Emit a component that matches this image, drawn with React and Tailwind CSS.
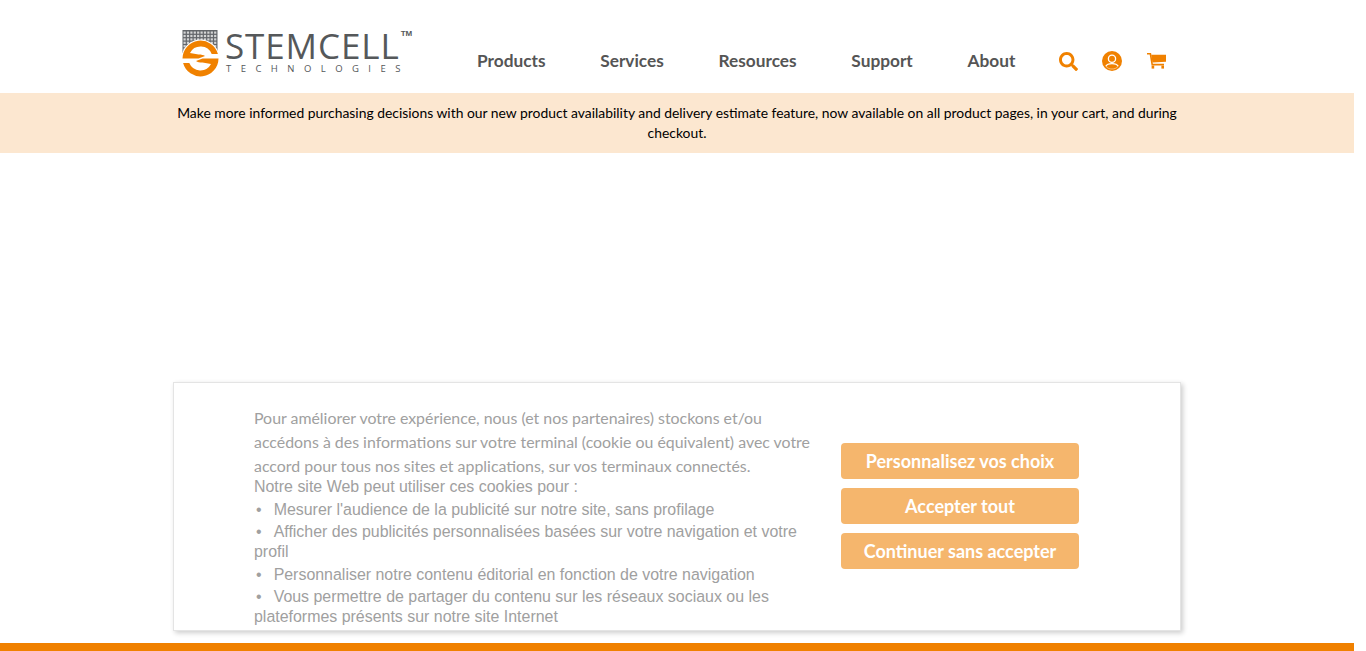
import { FaSearch } from "react-icons/fa";

const navItems = ["Products", "Services", "Resources", "Support", "About"];

const cookieUses = [
  "Mesurer l'audience de la publicité sur notre site, sans profilage",
  "Afficher des publicités personnalisées basées sur votre navigation et votre profil",
  "Personnaliser notre contenu éditorial en fonction de votre navigation",
  "Vous permettre de partager du contenu sur les réseaux sociaux ou les plateformes présents sur notre site Internet",
];

const cookieButtons = ["Personnalisez vos choix", "Accepter tout", "Continuer sans accepter"];

const swoosh = "M0 28 A18 18 0 0 1 35.4 23.5 L29.2 23.5 A12 12 0 0 0 7.5 22.5 L16 24 C19 24 21 24.5 22.5 25.5 L16 28 Z";

function LogoMark() {
  const dots = [];
  for (let row = 0; row < 6; row++) {
    for (let col = 0; col < 10; col++) {
      dots.push(<rect key={`${row}-${col}`} x={1.5 + col * 3.4} y={1.5 + row * 3.4} width="2.2" height="2.2" fill="#d4d5d6" />);
    }
  }
  return (
    <svg width="37" height="47" viewBox="0 0 37 47" className="shrink-0">
      <rect x="0.5" y="0" width="35" height="23" fill="#63666a" />
      {dots}
      <g transform="translate(0.5 0.5)">
        <circle cx="18" cy="28" r="19" fill="#ffffff" />
        <path d={swoosh} fill="#f08100" />
        <path d={swoosh} fill="#f08100" transform="rotate(180 18 28)" />
      </g>
    </svg>
  );
}

function Logo() {
  return (
    <div className="flex w-[295px] items-start pl-2">
      <div className="mt-[8px]">
        <LogoMark />
      </div>
      <div className="ml-[7px] mt-[7px] flex flex-col text-[#55585a]">
        <div className="flex h-[35px] items-start">
          <span className="-ml-[1px] font-['Open_Sans',sans-serif] text-[35px] font-medium leading-[34px] tracking-[0.9px]">STEMCELL</span>
          <span className="ml-[1px] mt-[1px] font-['Liberation_Sans',sans-serif] text-[8px] font-bold leading-[8px]">TM</span>
        </div>
        <span className="font-['Open_Sans',sans-serif] text-[9.5px] leading-[10px] tracking-[9.45px]">TECHNOLOGIES</span>
      </div>
    </div>
  );
}

function UserIcon() {
  return (
    <svg width="20" height="20" viewBox="0 0 20 20">
      <circle cx="10" cy="10" r="10" fill="#f08100" />
      <circle cx="10" cy="7.8" r="3.6" fill="#f08100" stroke="#ffffff" strokeWidth="1.3" />
      <path d="M3.8 15.2 C5 13 7 12.6 10 12.6 C13 12.6 15 13 16.2 15.2" fill="none" stroke="#ffffff" strokeWidth="1.3" />
      <path d="M3.8 15.2 C5.5 17.2 7.5 18 10 18 C12.5 18 14.5 17.2 16.2 15.2" fill="none" stroke="#ffffff" strokeWidth="0.8" opacity="0.6" />
    </svg>
  );
}

function CartIcon() {
  return (
    <svg width="19" height="16" viewBox="0 0 19 16">
      <path d="M0 0.8 H3.4 L5.2 11.6 H17" fill="none" stroke="#f08100" strokeWidth="1.6" />
      <path d="M4.2 1.8 H19 V8.8 L5.4 9.6 Z" fill="#f08100" />
      <rect x="4.6" y="12.6" width="2.6" height="3" fill="#f08100" />
      <rect x="14.4" y="12.6" width="2.6" height="3" fill="#f08100" />
    </svg>
  );
}

function Header() {
  return (
    <header className="h-[93px] w-full shrink-0 bg-white">
      <div className="mx-auto flex h-full w-[1006px] items-start pt-[22px]">
        <Logo />
        <nav className="ml-[8px] mt-[27px] flex gap-[54.7px] text-[17.28px] font-bold leading-[24px] text-[#555555]">
          {navItems.map((item) => (
            <a key={item} href="#">{item}</a>
          ))}
        </nav>
        <div className="ml-[43.5px] mt-[29px] flex items-center text-[#f08100]">
          <FaSearch className="text-[19px]" />
          <span className="ml-[24px]"><UserIcon /></span>
          <span className="ml-[25px]"><CartIcon /></span>
        </div>
      </div>
    </header>
  );
}

function CookieCard() {
  return (
    <div className="flex h-[249px] w-[1008px] items-start border border-[#e4e4e4] bg-white pl-[80px] shadow-[2px_2px_5px_rgba(0,0,0,0.2)]">
      <div className="w-[558px] pt-[23px] text-[#a0a0a0]">
        <p className="text-[15.9px] leading-[24px]">
          Pour améliorer votre expérience, nous (et nos partenaires) stockons et/ou accédons à des informations sur votre terminal (cookie ou équivalent) avec votre accord pour tous nos sites et applications, sur vos terminaux connectés.
        </p>
        <div className="-mt-[1px] font-['Liberation_Sans',sans-serif] text-[15.95px] leading-[20px]">
          <p className="mb-[2.5px]">Notre site Web peut utiliser ces cookies pour :</p>
          {cookieUses.map((text) => (
            <p key={text} className="mb-[2.5px] indent-[2px]">
              {"•\u00a0\u00a0\u2009" + text}
            </p>
          ))}
        </div>
      </div>
      <div className="ml-[29px] mt-[60px] flex w-[238px] flex-col gap-[9px]">
        {cookieButtons.map((label) => (
          <button key={label} className="h-[36px] rounded-[4px] bg-[#f5b66d] text-[18px] font-bold text-white">
            {label}
          </button>
        ))}
      </div>
    </div>
  );
}

export default function App() {
  return (
    <div className="flex h-screen w-[1354px] flex-col overflow-hidden bg-white font-['Lato',sans-serif]">
      <Header />
      <div className="flex h-[60px] w-full shrink-0 justify-center bg-[#fce7d0] pt-[10px]">
        <p className="w-[1006px] text-center text-[13.88px] leading-[20px] text-black">
          Make more informed purchasing decisions with our new product availability and delivery estimate feature, now available on all product pages, in your cart, and during checkout.
        </p>
      </div>
      <main className="flex flex-1 items-end justify-center pb-[12px]">
        <CookieCard />
      </main>
      <div className="h-[8px] w-full shrink-0 bg-[#f08100]" />
    </div>
  );
}
